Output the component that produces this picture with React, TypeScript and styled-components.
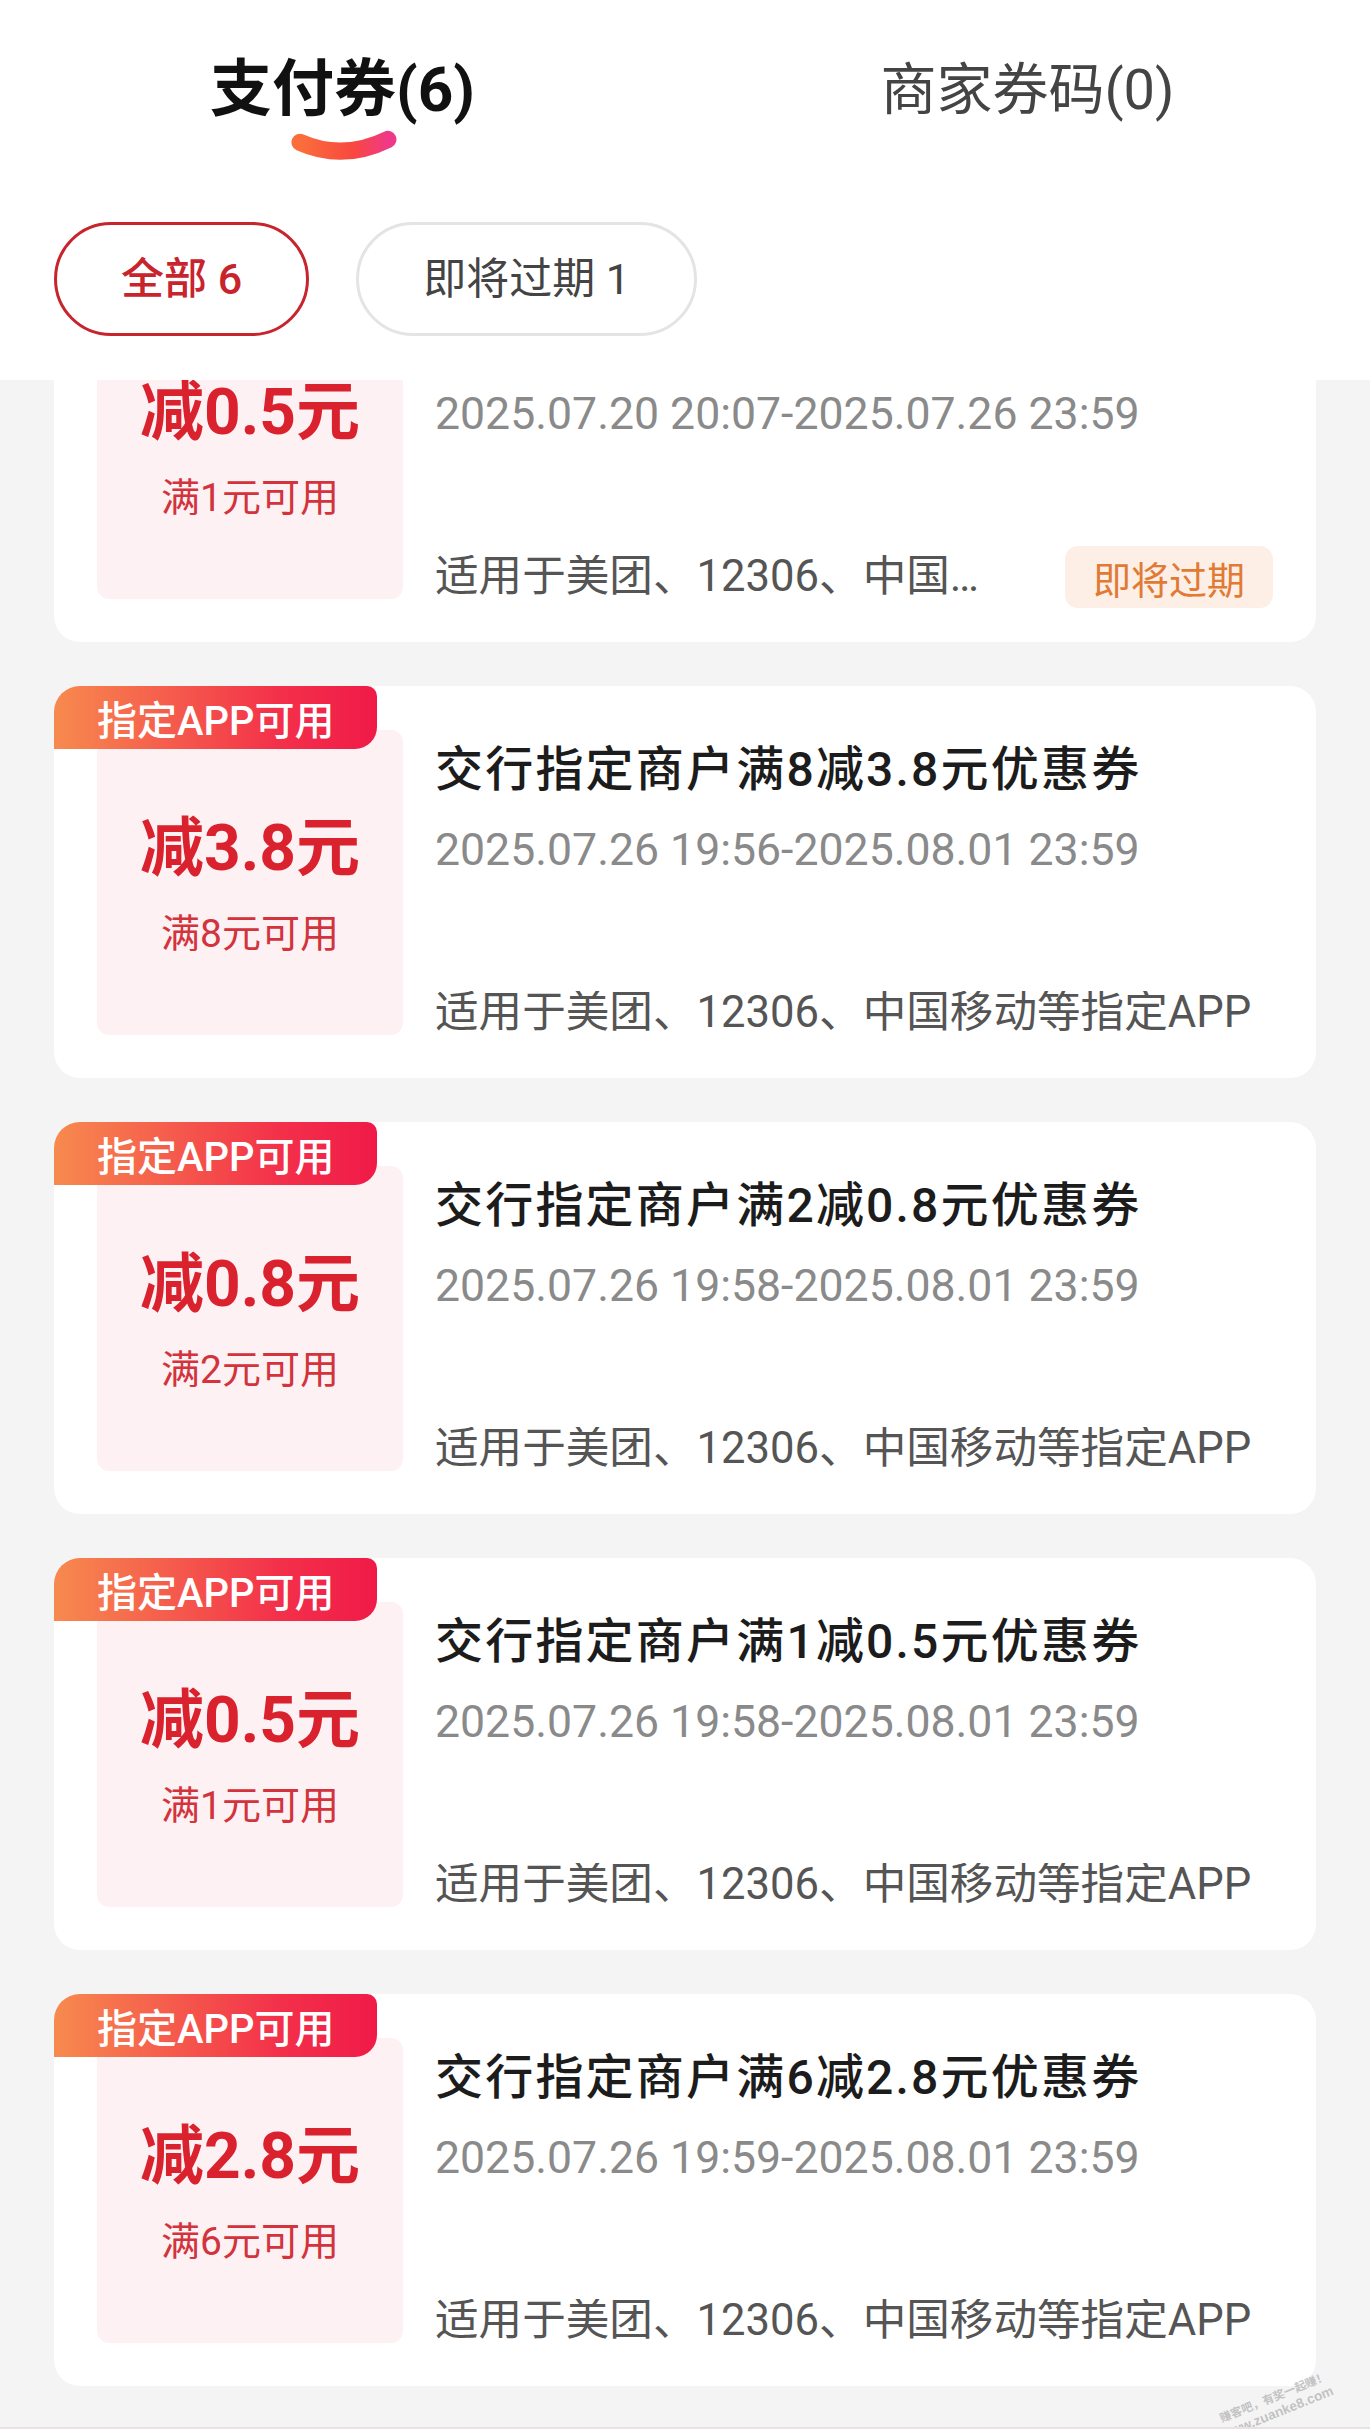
import React from 'react';
import styled, { createGlobalStyle } from 'styled-components';

const GlobalStyle = createGlobalStyle`
  html, body { margin: 0; padding: 0; background: #f4f4f4; }
  body {
    font-family: Roboto, "Noto Sans CJK SC", "Noto Sans", sans-serif;
    -webkit-font-smoothing: antialiased;
  }
  * { box-sizing: border-box; }
`;

const Page = styled.div`
  position: relative;
  width: 1370px;
  height: 2429px;
  display: flex;
  flex-direction: column;
  overflow: hidden;
  background: #f4f4f4;
  border-bottom: 2px solid #e8e2e2;
`;

const Header = styled.header`
  position: relative;
  z-index: 2;
  background: #ffffff;
  padding-bottom: 44px;
`;

const TabBar = styled.nav`
  display: flex;
  height: 170px;
  padding-top: 50px;
`;

const Tab = styled.div`
  flex: 1;
  display: flex;
  flex-direction: column;
  align-items: center;
`;

const TabLabel = styled.span<{ $active?: boolean }>`
  line-height: 80px;
  font-size: ${(p) => (p.$active ? 62 : 56)}px;
  font-weight: ${(p) => (p.$active ? 700 : 400)};
  color: ${(p) => (p.$active ? '#111111' : '#444444')};
`;

const Indicator = styled.svg`
  display: block;
  margin-top: -2px;
`;

const Filters = styled.div`
  display: flex;
  gap: 47px;
  padding: 52px 54px 0;
`;

const Chip = styled.button<{ $active?: boolean }>`
  height: 114px;
  padding: 0 64px;
  border-radius: 57px;
  border: 3px solid ${(p) => (p.$active ? '#c8242d' : '#e4e4e4')};
  background: #ffffff;
  font-family: inherit;
  font-size: 43px;
  line-height: 60px;
  font-weight: ${(p) => (p.$active ? 500 : 400)};
  color: ${(p) => (p.$active ? '#c8242d' : '#444444')};
  white-space: pre;
`;

const List = styled.main`
  flex: 1;
  min-height: 0;
  overflow: hidden;
  display: flex;
  flex-direction: column;
  gap: 44px;
  padding: 0 54px;
`;

const Card = styled.article`
  position: relative;
  flex-shrink: 0;
  display: flex;
  gap: 32px;
  padding: 44px 43px 43px;
  background: #ffffff;
  border-radius: 26px;
  &:first-child { margin-top: -130px; }
`;

const Tag = styled.div`
  position: absolute;
  top: 0;
  left: 0;
  height: 63px;
  padding: 0 42px 0 43px;
  display: flex;
  align-items: center;
  border-radius: 26px 10px 22px 0;
  background: linear-gradient(90deg, #f78a4e 0%, #f3304a 70%, #f01a48 100%);
  color: #ffffff;
  font-size: 40px;
  font-weight: 500;
  z-index: 1;
`;

const ValueBox = styled.div`
  width: 306px;
  height: 305px;
  flex-shrink: 0;
  display: flex;
  flex-direction: column;
  align-items: center;
  justify-content: center;
  gap: 25px;
  padding-top: 8px;
  background: #fdf1f3;
  border-radius: 12px;
`;

const Amount = styled.div`
  line-height: 70px;
  font-size: 64px;
  font-weight: 700;
  color: #d9222e;
`;

const Threshold = styled.div`
  line-height: 50px;
  font-size: 39px;
  color: #d2333c;
`;

const Info = styled.div`
  flex: 1;
  min-width: 0;
  display: flex;
  flex-direction: column;
`;

const Title = styled.div`
  margin-top: 12px;
  line-height: 56px;
  font-size: 48px;
  letter-spacing: 2.2px;
  font-weight: 500;
  color: #1c1c1c;
  white-space: nowrap;
`;

const Period = styled.div`
  margin-top: 26px;
  line-height: 52px;
  font-size: 44.6px;
  color: #8a8a8a;
  white-space: nowrap;
`;

const Footer = styled.div`
  margin-top: auto;
  height: 44px;
  display: flex;
  align-items: center;
  gap: 50px;
`;

const Scope = styled.div`
  flex: 1;
  min-width: 0;
  line-height: 44px;
  font-size: 43.6px;
  color: #555555;
  white-space: nowrap;
  overflow: hidden;
  text-overflow: ellipsis;
`;

const Badge = styled.span`
  flex-shrink: 0;
  height: 62px;
  padding: 0 28px;
  display: flex;
  align-items: center;
  border-radius: 13px;
  background: #fdefe5;
  color: #e07a34;
  font-size: 38px;
`;

const Watermark = styled.div`
  position: absolute;
  right: 34px;
  bottom: 30px;
  transform: rotate(-22deg);
  transform-origin: right bottom;
  font-family: "Liberation Sans", "Noto Sans CJK SC", sans-serif;
  font-weight: 700;
  color: rgba(160, 160, 160, 0.6);
  text-align: right;
  z-index: 3;
`;

const WatermarkLine = styled.div<{ $size: number }>`
  font-size: ${(p) => p.$size}px;
  line-height: 15px;
  white-space: nowrap;
`;

type Coupon = {
  amount: string;
  min: number;
  title: string;
  period: string;
  expiring?: boolean;
};

const coupons: Coupon[] = [
  { amount: '0.5', min: 1, title: '交行指定商户满1减0.5元优惠券', period: '2025.07.20 20:07-2025.07.26 23:59', expiring: true },
  { amount: '3.8', min: 8, title: '交行指定商户满8减3.8元优惠券', period: '2025.07.26 19:56-2025.08.01 23:59' },
  { amount: '0.8', min: 2, title: '交行指定商户满2减0.8元优惠券', period: '2025.07.26 19:58-2025.08.01 23:59' },
  { amount: '0.5', min: 1, title: '交行指定商户满1减0.5元优惠券', period: '2025.07.26 19:58-2025.08.01 23:59' },
  { amount: '2.8', min: 6, title: '交行指定商户满6减2.8元优惠券', period: '2025.07.26 19:59-2025.08.01 23:59' },
];

const Swoosh = () => (
  <Indicator width="124" height="44" viewBox="0 0 124 44">
    <defs>
      <linearGradient id="swoosh" x1="0" y1="0" x2="1" y2="0">
        <stop offset="0" stopColor="#fb6e3c" />
        <stop offset="0.6" stopColor="#f8483f" />
        <stop offset="1" stopColor="#ef3988" />
      </linearGradient>
    </defs>
    <path d="M17 15 Q62 35 109 12" fill="none" stroke="url(#swoosh)" strokeWidth="18" strokeLinecap="round" />
  </Indicator>
);

export default function App() {
  return (
    <>
      <GlobalStyle />
      <Page>
        <Header>
          <TabBar>
            <Tab>
              <TabLabel $active>支付券(6)</TabLabel>
              <Swoosh />
            </Tab>
            <Tab>
              <TabLabel>商家券码(0)</TabLabel>
            </Tab>
          </TabBar>
          <Filters>
            <Chip $active>全部 6</Chip>
            <Chip>即将过期 1</Chip>
          </Filters>
        </Header>
        <List>
          {coupons.map((c, i) => (
            <Card key={i}>
              <Tag>指定APP可用</Tag>
              <ValueBox>
                <Amount>减{c.amount}元</Amount>
                <Threshold>满{c.min}元可用</Threshold>
              </ValueBox>
              <Info>
                <Title>{c.title}</Title>
                <Period>{c.period}</Period>
                <Footer>
                  <Scope>适用于美团、12306、中国移动等指定APP</Scope>
                  {c.expiring && <Badge>即将过期</Badge>}
                </Footer>
              </Info>
            </Card>
          ))}
        </List>
        <Watermark>
          <WatermarkLine $size={11.5}>赚客吧，有奖一起赚！</WatermarkLine>
          <WatermarkLine $size={13.5}>www.zuanke8.com</WatermarkLine>
        </Watermark>
      </Page>
    </>
  );
}
